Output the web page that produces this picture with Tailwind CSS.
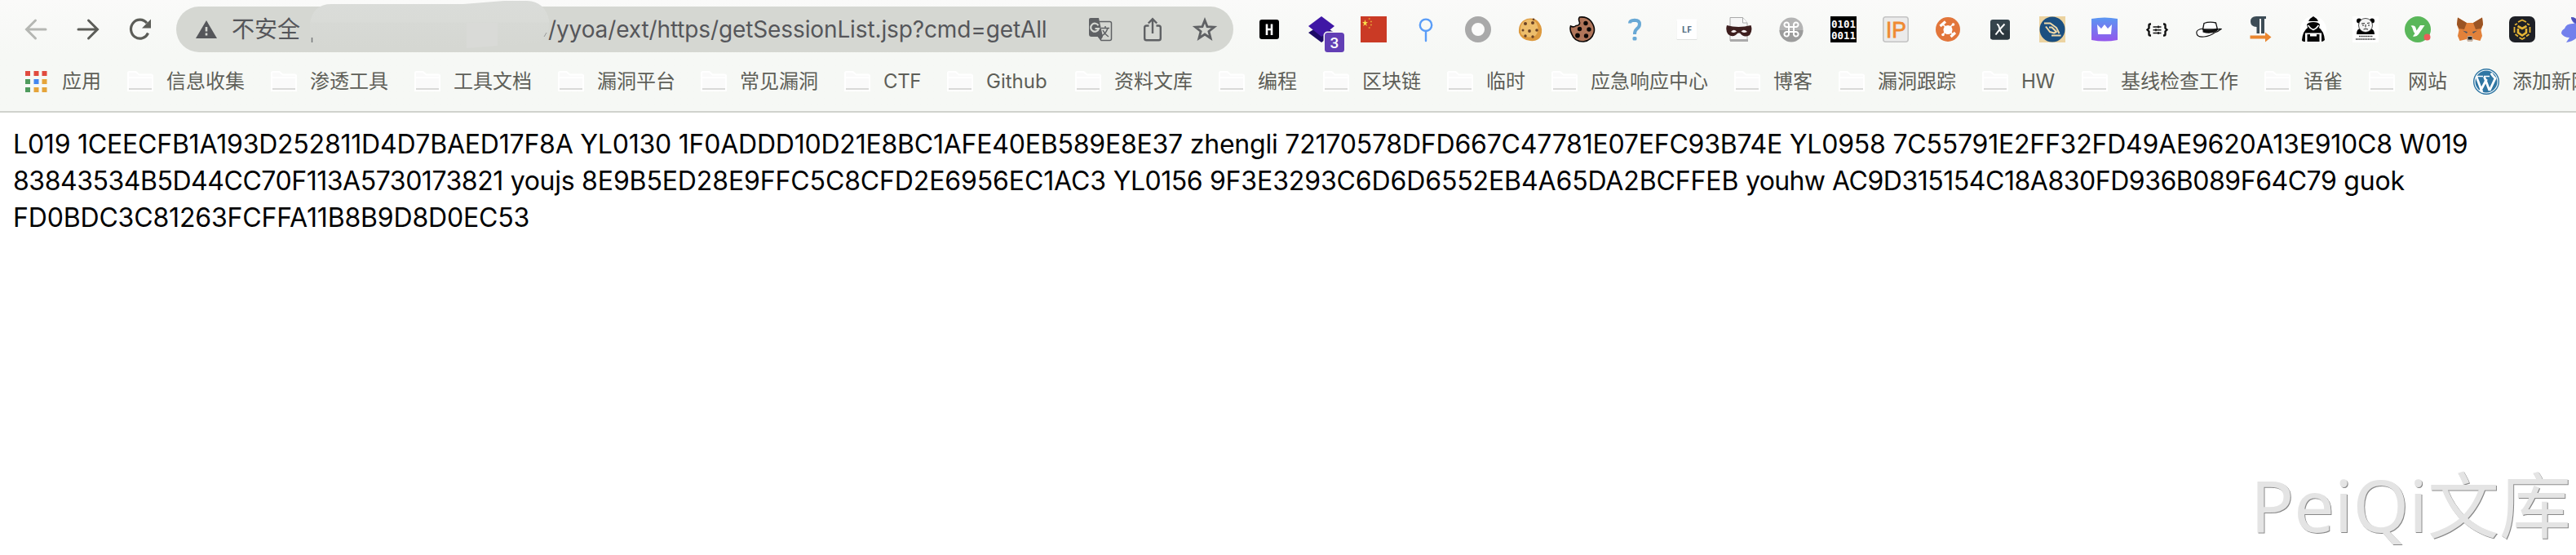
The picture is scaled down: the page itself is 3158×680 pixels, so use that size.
<!DOCTYPE html>
<html lang="zh-CN">
<head>
<meta charset="utf-8">
<title>getSessionList</title>
<script src="https://cdn.jsdelivr.net/npm/@tailwindcss/browser@4"></script>
</head>
<body class="w-[3158px] h-[680px] overflow-hidden bg-white relative font-['Inter','Noto_Sans_CJK_SC',sans-serif]">
<svg class="hidden">
  <symbol id="folder" viewBox="0 0 32 26"><path d="M1 24V2.500Q1 1 2.500 1H10.500L14.500 4.500H29.500Q31 4.500 31 6V24Z" fill="#fafafa" stroke="#fff" stroke-width="2"/><path d="M1 8H31" stroke="#fff" stroke-width="2"/><path d="M2 22H30" stroke="#d9d9d8" stroke-width="2"/></symbol>
</svg>
<header class="h-[138px] border-b-2 border-[#d0d2cd] bg-linear-to-b from-[#fafaf9] via-[#f6f8f5] to-[#f6f8f5]">
  <div class="h-[72px] flex items-center relative">
    <nav class="flex items-center gap-8 pl-7 w-[216px] shrink-0">
      <svg class="size-8" viewBox="0 0 32 32" fill="none" stroke="#b5b7b3" stroke-width="3" stroke-linecap="round"><path d="M28 16H5M15.500 5L4.500 16L15.500 27"/></svg>
      <svg class="size-8" viewBox="0 0 32 32" fill="none" stroke="#5c5d58" stroke-width="3" stroke-linecap="round"><path d="M4 16H27M16.500 5L27.500 16L16.500 27"/></svg>
      <svg class="size-8" viewBox="0 0 32 32"><path d="M25.500 20.500A11 11.500 0 1 1 24 8.300" fill="none" stroke="#5c5d58" stroke-width="3.200"/><path d="M29 3.500V14.500H18Z" fill="#5c5d58"/></svg>
    </nav>
    <div class="w-[1296px] h-14 rounded-full bg-[#d5d7d2] flex items-center shrink-0 text-[#55565a]">
      <svg class="w-[26px] h-[22px] ml-6 shrink-0" viewBox="0 0 26 22"><path d="M13 0L26 22H0Z" fill="#55565a"/><path d="M13 8V13.500M13 15.500V18.500" stroke="#d5d7d2" stroke-width="2.600"/></svg>
      <span class="ml-[18px] text-[28px] leading-none whitespace-nowrap">不安全</span>
      <div class="w-[304px] shrink-0"></div>
      <span class="text-[28px] leading-none whitespace-nowrap tracking-[-0.12px]">/yyoa/ext/https/getSessionList.jsp?cmd=getAll</span>
      <div class="ml-auto mr-[19px] flex items-center gap-8">
        <svg class="size-8" viewBox="0 0 32 32"><path d="M4 2H14L19 25H5Q2 25 2 22V4Q2 2 4 2Z" fill="#5f6164"/><path d="M15 6.500H27.500Q29.500 6.500 29.500 8.500V27.500Q29.500 29.500 27.500 29.500H17L13 24" fill="none" stroke="#5f6164" stroke-width="1.500"/><path d="M13 25H19L16.500 29Z" fill="#5f6164"/><path d="M13.500 11.200A5 5 0 1 0 14 15H9.500" fill="none" stroke="#d5d7d2" stroke-width="2.200"/><path d="M17 14.500H27M22 12V14.500M25 14.500Q23 21 17.500 24M19 17Q21 21.500 26 25" fill="none" stroke="#5f6164" stroke-width="1.500"/></svg>
        <svg class="size-8" viewBox="0 0 32 32" fill="none" stroke="#5f6164" stroke-width="2.400"><path d="M11.500 11.500H8.500Q6.200 11.500 6.200 13.800V27Q6.200 29.300 8.500 29.300H23.500Q25.800 29.300 25.800 27V13.800Q25.800 11.500 23.500 11.500H20.500M16 21V4M10.800 8.500L16 3.300L21.200 8.500"/></svg>
        <svg class="size-8" viewBox="0 0 32 32"><path d="M16 4.800L19 12.600L27.500 13.100L20.900 18.400L23.100 26.700L16 22L8.900 26.700L11.100 18.400L4.500 13.100L13 12.600Z" fill="none" stroke="#5f6164" stroke-width="2.800"/></svg>
      </div>
    </div>
    <!-- smudged-out host name -->
    <svg class="absolute left-[378px] top-0 w-[300px] h-[64px]" viewBox="0 0 300 64"><defs><linearGradient id="sm" x1="0" y1="0" x2="0" y2="1"><stop offset="0" stop-color="#dadcd9"/><stop offset=".45" stop-color="#d9dbd7"/><stop offset=".46" stop-color="#d7d9d5"/><stop offset="1" stop-color="#d5d7d2"/></linearGradient></defs><path d="M2 28Q6 5 28 5H190L240 1H268Q290 2 295 24Q297 45 280 53L195 59H10L2 48Z" fill="url(#sm)"/><path d="M194 28H232V56L194 59Z" fill="#d9dad7"/><path d="M4.500 46V52" stroke="#77787a" stroke-width="1.500"/><path d="M289 45L292 40" stroke="#999a9a" stroke-width="1"/></svg>

    <div class="flex items-center gap-8 ml-7 shrink-0">
      <!-- H -->
      <svg class="size-8 shrink-0" viewBox="0 0 32 32"><rect x="4" y="4" width="24" height="24" rx="3" fill="#000"/><path d="M13 9.500V23M19 9.500V23M13 16H19" stroke="#fff" stroke-width="2.600"/></svg>
      <!-- layers with badge -->
      <svg class="size-8 shrink-0 overflow-visible" viewBox="0 0 32 32"><path d="M0 20L16 32L32 20L16 10Z" fill="#1c0a66"/><path d="M16 0L32 12L16 25L0 12Z" fill="#3f17a5"/><rect x="18.500" y="18.500" width="27" height="27" rx="5" fill="#f7f8f6"/><rect x="20" y="20" width="24" height="24" rx="3.500" fill="#623fb5"/><text x="32" y="39" text-anchor="middle" font-family="Roboto" font-weight="500" font-size="19" fill="#fff">3</text></svg>
      <!-- flag -->
      <svg class="size-8 shrink-0" viewBox="0 0 32 32"><path d="M0 0H32V32H0Z" fill="#ca3a25"/><path d="M5.500 4L6.400 7L9 7L6.900 8.700L7.700 12L5.500 10L3.300 12L4.100 8.700L2 7H4.600Z" fill="#f9dc4a"/><path d="M9.800 3h1.800M12 6.500h1.800M12 10.500h1.800M9.800 14h1.800" stroke="#e8a93a" stroke-width="1.600"/></svg>
      <!-- pin -->
      <svg class="size-8 shrink-0" viewBox="0 0 32 32" fill="none" stroke="#5a9df8" stroke-width="2.400" stroke-linecap="round"><circle cx="16" cy="10.800" r="7.200"/><path d="M16 18V30"/></svg>
      <!-- ring -->
      <svg class="size-8 shrink-0" viewBox="0 0 32 32"><circle cx="16" cy="16" r="12" fill="#fbfbfa" stroke="#a9a9a9" stroke-width="8"/></svg>
      <!-- cookie -->
      <svg class="size-8 shrink-0" viewBox="0 0 32 32"><path d="M12 3Q22 1 27 8Q32 15 29 24Q26 31 16 30Q5 29 2 20Q1 7 12 3Z" fill="#dd9a3f"/><path d="M12 4Q20 3 24 9Q28 18 22 24Q12 28 5 22Q1 9 12 4Z" fill="#edbd6b"/><g fill="#6a4226"><circle cx="10" cy="9" r="2"/><circle cx="19" cy="8" r="2"/><circle cx="7" cy="17" r="1.500"/><circle cx="15" cy="18" r="1.900"/><circle cx="24" cy="17" r="1.800"/><circle cx="10" cy="24" r="1.700"/><circle cx="19" cy="25" r="1.700"/><circle cx="20" cy="3.800" r="1.300"/></g></svg>
      <!-- bitten cookie -->
      <svg class="size-8 shrink-0" viewBox="0 0 32 32"><path d="M12.500 1Q21 0 26 5.500Q32 13 30 20Q27 30 17 31Q6 31 3 22Q0 17 1.500 12Q5 14 8 11.500Q13 11 12.500 7.500Q10.500 3 12.500 1Z" fill="#b0755a" stroke="#0b0706" stroke-width="1.600"/><g fill="#0b0706"><circle cx="20" cy="8.500" r="2.700"/><circle cx="12.500" cy="15.500" r="2.700"/><circle cx="24" cy="16" r="2.700"/><circle cx="10" cy="23.500" r="2.900"/><circle cx="20.500" cy="24" r="2.700"/></g></svg>
      <!-- question -->
      <svg class="size-8 shrink-0" viewBox="0 0 32 32"><path d="M10 8.500Q10 5 16 4.800Q22 5 22 9.500Q22 13 18.500 15.500Q16 17.500 16 22" fill="none" stroke="#68a8d5" stroke-width="4"/><rect x="13.500" y="25" width="5" height="4.500" rx="1.500" fill="#68a8d5"/></svg>
      <!-- LF -->
      <svg class="size-8 shrink-0" viewBox="0 0 32 32"><rect x="3.500" y="5" width="25" height="24" rx="1" fill="#dfe1df"/><rect x="3.500" y="3.500" width="25" height="24.500" rx="1" fill="#fff"/><text x="16" y="20" text-anchor="middle" font-family="Open Sans" font-weight="700" font-size="11" fill="#5a7285">LF</text></svg>
      <!-- masked page -->
      <svg class="size-8 shrink-0" viewBox="0 0 32 32"><path d="M5 1.500H20.500L26 8V30H5Z" fill="#f6f6f6" stroke="#aaa" stroke-width="1"/><path d="M20.500 1.500V8H26" fill="#fff" stroke="#aaa"/><path d="M5 28H27V31H5Z" fill="#aaa"/><path d="M1 11Q15 15 30.500 11Q33 17 29 23Q22 27 17 20.500H14.500Q9 27 2.500 22Q-1 17 1 11Z" fill="#3d1e1e"/><path d="M6 19Q9.500 15 13 18.500Q10 21 6 19ZM18.500 18.500Q22 15 26 19Q21 21 18.500 18.500Z" fill="#f4eeee"/></svg>
      <!-- command -->
      <svg class="size-8 shrink-0" viewBox="0 0 32 32"><circle cx="16" cy="16" r="14.500" fill="#b4b4b4"/><path d="M1.500 17H30.500A14.500 14.500 0 0 1 1.500 17Z" fill="#9c9c9c"/><path d="M13 13H19V19H13ZM13 13H10.500A2.800 2.800 0 1 1 13 10.500ZM19 13V10.500A2.800 2.800 0 1 1 21.500 13ZM19 19H21.500A2.800 2.800 0 1 1 19 21.500ZM13 19V21.500A2.800 2.800 0 1 1 10.500 19Z" fill="none" stroke="#fff" stroke-width="2"/></svg>
      <!-- binary -->
      <svg class="size-8 shrink-0" viewBox="0 0 32 32"><path d="M0 0H32V32H0Z"/><g font-family="DejaVu Sans Mono" font-weight="700" font-size="12.500" fill="#fff"><text x="1" y="13.500" textLength="30">0101</text><text x="1" y="28" textLength="30">0011</text></g></svg>
      <!-- IP -->
      <svg class="size-8 shrink-0" viewBox="0 0 32 32"><rect x=".8" y=".8" width="30.400" height="30.400" rx="3" fill="#ebebeb" stroke="#c4c4c4" stroke-width="1.600"/><text x="16.500" y="26" text-anchor="middle" font-family="Liberation Sans" font-size="28" fill="#ef8a32" stroke="#ef8a32" stroke-width=".8" textLength="25" lengthAdjust="spacingAndGlyphs">IP</text></svg>
      <!-- orange hub -->
      <svg class="size-8 shrink-0" viewBox="0 0 32 32"><circle cx="16" cy="16" r="15" fill="#e2763b"/><circle cx="16" cy="16.500" r="5.500" fill="#fff"/><path d="M10 10L22 22M22 10L10 22" stroke="#fff" stroke-width="1.600"/><circle cx="22.500" cy="10" r="1.800" fill="#fff"/><circle cx="10" cy="22.500" r="1.800" fill="#fff"/><path d="M6.500 12L13 6.500M19.500 25L25 20" stroke="#fff" stroke-width="3.200"/></svg>
      <!-- X -->
      <svg class="size-8 shrink-0" viewBox="0 0 32 32"><rect x="4" y="4" width="24" height="24.500" rx="3" fill="#36454d"/><rect x="4" y="17" width="24" height="11.500" rx="3" fill="#2b373e"/><path d="M12 10Q14 9.500 15 14Q17 21 20.500 22M21.500 9.500Q16 15 10.500 22.500" fill="none" stroke="#fff" stroke-width="2"/></svg>
      <!-- hand seal -->
      <svg class="size-8 shrink-0" viewBox="0 0 32 32"><path d="M0 0H32V32H0Z" fill="#ecd3a0"/><circle cx="16" cy="16" r="15.500" fill="#1b4f80"/><path d="M6 8.500H13.500L21 14L24.500 21M8 12.500L13 19L18 20.500L21 19L15.500 13.500L12 13.500M15 23.500H26.500" fill="none" stroke="#f0d9a8" stroke-width="2" stroke-linejoin="round"/></svg>
      <!-- crown -->
      <svg class="size-8 shrink-0" viewBox="0 0 32 32"><defs><linearGradient id="cr" x1="0" y1="0" x2="0" y2="1"><stop stop-color="#5a97f2"/><stop offset="1" stop-color="#9457ec"/></linearGradient></defs><path d="M0 3Q16 0 32 3V29Q16 32 0 29Z" fill="url(#cr)"/><path d="M7 10L12 15L16 10L20 15L25 10L24 22H8Z" fill="#fff"/></svg>
      <!-- braces -->
      <svg class="size-8 shrink-0" viewBox="0 0 32 32" fill="none" stroke="#111"><path d="M9 9.500H8Q6.500 9.500 6.500 11V14.500L4.500 16.500L6.500 18.500V22Q6.500 23.500 8 23.500H9M24 9.500H25Q26.500 9.500 26.500 11V14.500L28.500 16.500L26.500 18.500V22Q26.500 23.500 25 23.500H24" stroke-width="2.400"/><path d="M11.500 13H21.500M11.500 16.800H21.500M11.500 20.500H21.500M18 11.500V14.500M15 15.300V18.300M18 19V22" stroke-width="1.500"/></svg>
      <!-- hat -->
      <svg class="size-8 shrink-0" viewBox="0 0 32 32"><path d="M8.500 15Q1 16 .8 20Q1 26 10 25Q18 24 23 20Q27 19 31 15.500Q28.500 15 26 16.500" fill="#fff" stroke="#111" stroke-width="1.200"/><path d="M8.500 16L10 8.500Q17 6 24.500 8L26.500 16Z" fill="#fff" stroke="#111" stroke-width="1.300"/><path d="M8.500 15.500Q18 18 26 14.500L26.500 18Q18 22.500 8.500 19.500Z" fill="#111"/></svg>
      <!-- pilcrow -->
      <svg class="size-8 shrink-0" viewBox="0 0 32 32"><path d="M22 0V3H20V21H16V3H14V21H10.500V13Q3 13 3 6.500Q3 0 10 0Z" fill="#3d4c56"/><path d="M2.500 23.500H21V19.500L28.500 25.500L21 31.500V27.500H2.500Z" fill="#ea862f"/></svg>
      <!-- hooded figure -->
      <svg class="size-8 shrink-0" viewBox="0 0 32 32"><circle cx="16" cy="16" r="16" fill="#fff"/><path d="M16 0Q20 2 22 6H10Q12 2 16 0ZM8 10Q10 7 16 7Q22 7 24 10L23 14Q29 18 30 29Q28 31 26 31V20.500H6V31Q2 31 2 29Q3 18 9 14ZM8.500 22H12V24.500H20V22H23.500V31H8.500Z" fill="#050505"/><path d="M9.500 11Q12 15 16 16.500Q20 15 22.500 11" fill="none" stroke="#fff" stroke-width="1.500"/></svg>
      <!-- panda -->
      <svg class="size-8 shrink-0" viewBox="0 0 32 32"><path d="M0 0H32V32H0Z" fill="#fff"/><path d="M5 22Q5 15 10 15L22 15Q27 16 27 22Z"/><circle cx="8" cy="5.500" r="3"/><circle cx="24" cy="5.500" r="3"/><circle cx="16" cy="11" r="8.500" fill="#f4f4f4" stroke="#222" stroke-width=".8"/><path d="M11 9L15 8.500M18 8.500L21 8M12 11h2M19 11h2M13.500 16Q16 14.500 19 16M16 10V13.500" stroke="#222" fill="none"/><path d="M8 24.500H25M4 28H28" stroke="#333" stroke-width="1.500" stroke-dasharray="1.500 .6"/></svg>
      <!-- y -->
      <svg class="size-8 shrink-0" viewBox="0 0 32 32"><circle cx="16" cy="16" r="16" fill="#5ab75a"/><path d="M7.500 11.500Q12.500 10.500 13.500 14L14.500 17.500L19 11H24.500L17 22Q14.500 25.500 10 24.500L12.500 21Q10.500 19 10 16Q9.500 13 7.500 11.500Z" fill="#fff"/><circle cx="27.500" cy="25.500" r="4" fill="#ec5d59"/></svg>
      <!-- fox -->
      <svg class="size-8 shrink-0" viewBox="0 0 32 32"><path d="M1 1.500L12 8H20L31 1.500L32 10L29.500 17L31 24L28.500 30L20 28L18.500 31H13.500L12 28L3.500 30L1 24L2.500 17L0 10Z" fill="#e2813a"/><path d="M1 1.500L12 8L9 16L2.500 15L0 10ZM31 1.500L20 8L23 16L29.500 15L32 10Z" fill="#9a5424"/><path d="M7 17.500L13 19L12 21ZM25 17.500L19 19L20 21Z" fill="#4a5563"/><path d="M12 28L13.500 24H18.500L20 28L18.500 31H13.500Z" fill="#c9b9ab"/><path d="M13.500 25H18.500V28.500H13.500Z" fill="#222"/></svg>
      <!-- gold cube -->
      <svg class="size-8 shrink-0" viewBox="0 0 32 32"><rect width="32" height="32" rx="7" fill="#1e2026"/><g fill="none" stroke="#e6b535"><path d="M11 7L16 4.500L21 7M7 10.500L10 9M25 10.500L22 9M6.500 13V20M25.500 13V20M7.500 22L11 24.500M24.500 22L21 24.500M12.500 26L16 28L19.500 26" stroke-width="1.800"/><path d="M10.500 12L16 15L21.500 12M11 15V20L16 23.500L21 20V15" stroke-width="2.600"/></g></svg>
      <!-- rabbit, cut by the window edge -->
      <svg class="size-8 shrink-0" viewBox="0 0 32 32"><path d="M12 1Q19 1 21 8L24 18Q20 30 6 32L10 26Q3 26 0 21Q0 17 4 15Q6 8 16 9Q12 5 12 1Z" fill="#7280ec"/><path d="M12 1Q19 1 21 8L18 9Q12 5 12 1Z" fill="#4d50b8"/></svg>
    </div>
  </div>

  <div class="h-16 flex items-center pl-[31px] text-[24px] leading-none text-[#5e5f58] whitespace-nowrap pb-[9px] [&>svg]:shrink-0">
    <svg class="w-[27px] h-[26px]" viewBox="0 0 27 26"><path d="M0 0h6v6H0zM10.500 0h6v6h-6zM20.500 0h6v6h-6z" fill="#e04b3f"/><path d="M0 10h6v6H0zM0 20h6v6H0z" fill="#4f9b5d"/><path d="M10.500 10h6v6h-6z" fill="#4387f0"/><path d="M20.500 10h6v6h-6zM10.500 20h6v6h-6zM20.500 20h6v6h-6z" fill="#e5a43a"/></svg>
    <span class="ml-[18px] w-[80px] shrink-0">应用</span>
    <svg class="w-8 h-[26px]"><use href="#folder"/></svg><span class="ml-4 w-32 shrink-0">信息收集</span>
    <svg class="w-8 h-[26px]"><use href="#folder"/></svg><span class="ml-4 w-32 shrink-0">渗透工具</span>
    <svg class="w-8 h-[26px]"><use href="#folder"/></svg><span class="ml-4 w-32 shrink-0">工具文档</span>
    <svg class="w-8 h-[26px]"><use href="#folder"/></svg><span class="ml-4 w-[127px] shrink-0">漏洞平台</span>
    <svg class="w-8 h-[26px]"><use href="#folder"/></svg><span class="ml-4 w-32 shrink-0">常见漏洞</span>
    <svg class="w-8 h-[26px]"><use href="#folder"/></svg><span class="ml-4 w-[78px] shrink-0 tracking-[-0.4px]">CTF</span>
    <svg class="w-8 h-[26px]"><use href="#folder"/></svg><span class="ml-4 w-[109px] shrink-0">Github</span>
    <svg class="w-8 h-[26px]"><use href="#folder"/></svg><span class="ml-4 w-32 shrink-0">资料文库</span>
    <svg class="w-8 h-[26px]"><use href="#folder"/></svg><span class="ml-4 w-20 shrink-0">编程</span>
    <svg class="w-8 h-[26px]"><use href="#folder"/></svg><span class="ml-4 w-[104px] shrink-0">区块链</span>
    <svg class="w-8 h-[26px]"><use href="#folder"/></svg><span class="ml-4 w-20 shrink-0">临时</span>
    <svg class="w-8 h-[26px]"><use href="#folder"/></svg><span class="ml-4 w-44 shrink-0">应急响应中心</span>
    <svg class="w-8 h-[26px]"><use href="#folder"/></svg><span class="ml-4 w-20 shrink-0">博客</span>
    <svg class="w-8 h-[26px]"><use href="#folder"/></svg><span class="ml-4 w-32 shrink-0">漏洞跟踪</span>
    <svg class="w-8 h-[26px]"><use href="#folder"/></svg><span class="ml-4 w-[74px] shrink-0 tracking-[-0.4px]">HW</span>
    <svg class="w-8 h-[26px]"><use href="#folder"/></svg><span class="ml-4 w-44 shrink-0">基线检查工作</span>
    <svg class="w-8 h-[26px]"><use href="#folder"/></svg><span class="ml-4 w-20 shrink-0">语雀</span>
    <svg class="w-8 h-[26px]"><use href="#folder"/></svg><span class="ml-4 w-20 shrink-0">网站</span>
    <svg class="size-8" viewBox="0 0 32 32"><circle cx="16" cy="16" r="15.300" fill="#fff" stroke="#2f76a3" stroke-width="1.400"/><circle cx="16" cy="16" r="13.500" fill="#2f76a3"/><path d="M4 10L11 29M13.500 10L20 27M8.500 28L16.500 13M20 27L27 12Q23 8 22 5.500" fill="none" stroke="#fff" stroke-width="2.800"/><path d="M3 9.500H12M13 9.500H20" stroke="#fff" stroke-width="1.600"/></svg>
    <span class="ml-4 shrink-0">添加新网站</span>
  </div>
</header>

<main class="pt-4 pl-4 text-[32px] leading-[45px] text-black whitespace-nowrap tracking-[-0.16px]">
  <p class="tracking-[-0.215px]">L019 1CEECFB1A193D252811D4D7BAED17F8A YL0130 1F0ADDD10D21E8BC1AFE40EB589E8E37 zhengli 72170578DFD667C47781E07EFC93B74E YL0958 7C55791E2FF32FD49AE9620A13E910C8 W019</p>
  <p><span class="tracking-[-0.46px]">83843534B5D44CC70F113A5730173821</span> <span class="tracking-[-0.3px]">youjs</span> <span class="tracking-[-0.12px]">8E9B5ED28E9FFC5C8CFD2E6956EC1AC3</span> <span class="tracking-[-0.5px]">YL0156</span> <span class="tracking-[-0.12px]">9F3E3293C6D6D6552EB4A65DA2BCFFEB</span> <span class="tracking-[-0.7px]">youhw</span> <span class="tracking-[-0.47px]">AC9D315154C18A830FD936B089F64C79</span> <span>guok</span></p>
  <p>FD0BDC3C81263FCFFA11B8B9D8D0EC53</p>
</main>
<div class="absolute right-[6px] bottom-[2px] text-[88px] leading-[120px] whitespace-nowrap text-[#e4e4e4] font-['Noto_Sans','Noto_Sans_CJK_SC',sans-serif] [text-shadow:1px_1px_0_#888]">PeiQi文库</div>
</body>
</html>
